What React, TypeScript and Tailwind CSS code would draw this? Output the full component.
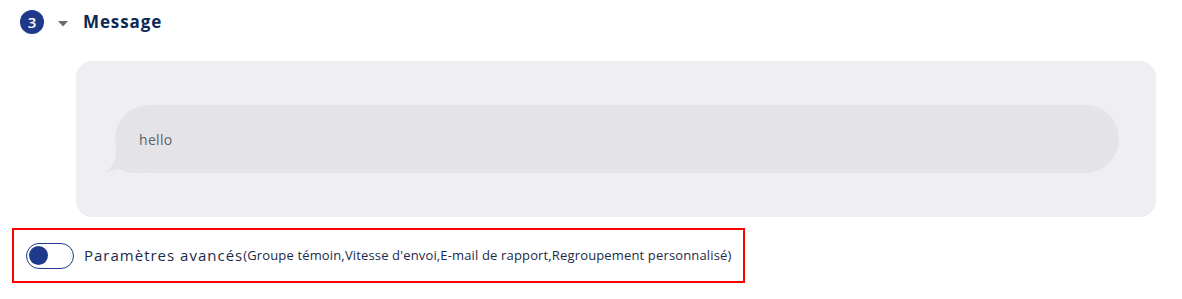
import React, { useState } from 'react';

const App: React.FC = () => {
    const [advanced, setAdvanced] = useState<boolean>(false);

    return (
        <div className="w-[1182px] h-[299px] bg-white font-['Open_Sans',sans-serif] relative">
            {/* Step header */}
            <div className="flex items-center h-[44px] pl-[20px]">
                <div className="w-[24px] h-[24px] rounded-full bg-[#1f3a8a] text-white text-[15px] font-semibold flex items-center justify-center">
                    3
                </div>
                <svg className="ml-[14px] mt-[3px]" width="10" height="6" viewBox="0 0 10 6">
                    <path d="M0 0 L10 0 L5 5.5 Z" fill="#6b6b6b" />
                </svg>
                <h2 className="ml-[15px] text-[17px] font-bold text-[#0d2a55] tracking-[0.9px]">Message</h2>
            </div>

            {/* Message preview */}
            <div className="ml-[76px] mt-[17px] w-[1080px] h-[156px] rounded-[16px] bg-[#eeeef3] pt-[44px] pl-[39px] pr-[37px]">
                <div className="relative h-[68px] rounded-full bg-[#e4e3e8] flex items-center pl-[24px]">
                    <svg className="absolute left-[-12px] bottom-0" width="40" height="24" viewBox="0 0 40 24">
                        <path d="M13 0 C13 10 11 19 0 24 C6 23 10 21 15 20 C19 20 21 24 30 24 L40 24 L40 0 Z" fill="#e4e3e8" />
                    </svg>
                    <span className="relative text-[14px] text-[#5f6168] tracking-[0.3px]">hello</span>
                </div>
            </div>

            {/* Advanced settings */}
            <div className="ml-[12px] mt-[11px] w-[733px] h-[55px] border-2 border-[#ff0000] flex items-center pl-[12px] whitespace-nowrap overflow-hidden">
                <button
                    onClick={() => setAdvanced(!advanced)}
                    className={`shrink-0 w-[48px] h-[26px] rounded-full border border-[#1f3a8a] flex items-center px-[2px] ${advanced ? 'justify-end bg-[#1f3a8a]' : 'justify-start bg-white'}`}
                >
                    <span className={`w-[19px] h-[19px] rounded-full ${advanced ? 'bg-white' : 'bg-[#1f3a8a]'}`} />
                </button>
                <span className="ml-[10px] text-[15px] text-[#1b2a4a] tracking-[1px]">Paramètres avancés</span>
                <span className="text-[13px] text-[#1b2a4a] tracking-[0.15px]">(Groupe témoin,Vitesse d'envoi,E-mail de rapport,Regroupement personnalisé)</span>
            </div>
        </div>
    );
};

export default App;
